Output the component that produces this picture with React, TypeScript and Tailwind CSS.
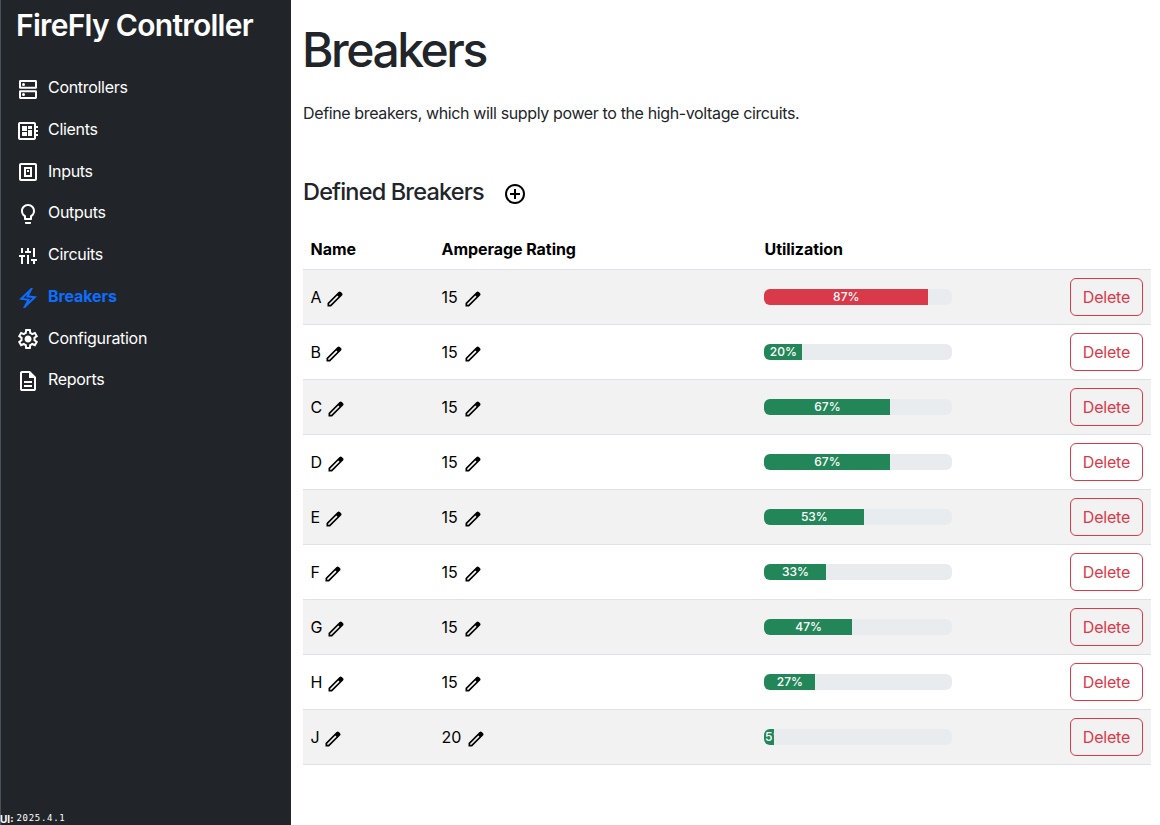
import type { ReactNode } from "react";
import { MdOutlineDeveloperBoard, MdLightbulbOutline } from "react-icons/md";

function Symbol({ d, size = 24, className }: { d: string; size?: number; className?: string }) {
  return (
    <svg viewBox="0 -960 960 960" width={size} height={size} fill="currentColor" className={className}>
      <path d={d} />
    </svg>
  );
}

const EDIT =
  "M200-200h57l391-391-57-57-391 391v57Zm-80 80v-170l528-527q12-11 26.5-17t30.5-6q16 0 31 6t26 18l55 56q12 11 17.5 26t5.5 30q0 16-5.5 30.5T817-647L290-120H120Z";
const ADD =
  "M440-280h80v-160h160v-80H520v-160h-80v160H280v80h160v160Zm40 200q-83 0-156-31.5T197-197q-54-54-85.5-127T80-480q0-83 31.5-156T197-763q54-54 127-85.5T480-880q83 0 156 31.5T763-763q54 54 85.5 127T880-480q0 83-31.5 156T763-197q-54 54-127 85.5T480-80Zm0-80q134 0 227-93t93-227q0-134-93-227t-227-93q-134 0-227 93t-93 227q0 134 93 227t227 93Zm0-320Z";
const DOCUMENT =
  "M320-240h320v-80H320v80Zm0-160h320v-80H320v80ZM240-80q-33 0-56.5-23.5T160-160v-640q0-33 23.5-56.5T240-880h320l240 240v480q0 33-23.5 56.5T720-80H240Zm280-520v-200H240v640h480v-440H520Z";
const SETTINGS =
  "m370-80-16-128q-13-5-24.5-12T307-235l-119 50L78-375l103-78q-1-7-1-13.5v-27q0-6.5 1-13.5L78-585l110-190 119 50q11-8 23-15t24-12l16-128h220l16 128q13 5 24.5 12t22.5 15l119-50 110 190-103 78q1 7 1 13.5v27q0 6.5-2 13.5l103 78-110 190-118-50q-11 8-23 15t-24 12L590-80H370Zm70-80h79l14-106q31-8 57.5-23.5T639-327l99 41 39-68-86-65q5-14 7-29.5t2-31.5q0-16-2-31.5t-7-29.5l86-65-39-68-99 42q-22-23-48.5-38.5T533-694l-13-106h-79l-14 106q-31 8-57.5 23.5T321-633l-99-41-39 68 86 64q-5 15-7 30t-2 32q0 16 2 31t7 30l-86 65 39 68 99-42q22 23 48.5 38.5T427-266l13 106Zm42-180q58 0 99-41t41-99q0-58-41-99t-99-41q-59 0-99.5 41T342-480q0 58 40.5 99t99.5 41Zm-2-140Z";
const BOLT =
  "m280-80 160-300-320-40 480-460h80L520-580l320 40L360-80h-80Zm222-247 161-154-269-34 63-117-160 154 268 33-63 118Zm-22-153Z";
const MIX =
  "M200-160v-280h-80v-80h240v80h-80v280h-80Zm0-440v-200h80v200h-80Zm160 0v-80h80v-120h80v120h80v80H360Zm80 440v-360h80v360h-80Zm240 0v-120h-80v-80h240v80h-80v120h-80Zm0-280v-360h80v360h-80Z";

function ServerIcon() {
  return (
    <svg viewBox="0 0 24 24" width="24" height="24" fill="none" stroke="currentColor" strokeWidth="2">
      <rect x="4" y="4" width="16" height="6.8" rx="0.4" />
      <rect x="4" y="14.2" width="16" height="6.8" rx="0.4" />
      <circle cx="7.5" cy="7.4" r="1.5" fill="currentColor" stroke="none" />
      <circle cx="7.5" cy="17.6" r="1.5" fill="currentColor" stroke="none" />
    </svg>
  );
}

function SwitchIcon() {
  return (
    <svg viewBox="0 0 24 24" width="24" height="24" fill="none" stroke="currentColor" strokeWidth="2">
      <rect x="4" y="4" width="16" height="16" rx="1" />
      <rect x="9" y="8" width="6" height="8" />
      <rect x="11" y="10" width="2" height="2" fill="currentColor" stroke="none" />
    </svg>
  );
}

const nav: { label: string; icon: ReactNode; active?: boolean }[] = [
  { label: "Controllers", icon: <ServerIcon /> },
  { label: "Clients", icon: <MdOutlineDeveloperBoard size={24} /> },
  { label: "Inputs", icon: <SwitchIcon /> },
  { label: "Outputs", icon: <MdLightbulbOutline size={24} /> },
  { label: "Circuits", icon: <Symbol d={MIX} /> },
  { label: "Breakers", icon: <Symbol d={BOLT} />, active: true },
  { label: "Configuration", icon: <Symbol d={SETTINGS} /> },
  { label: "Reports", icon: <Symbol d={DOCUMENT} /> },
];

const breakers = [
  { name: "A", amps: 15, used: 87 },
  { name: "B", amps: 15, used: 20 },
  { name: "C", amps: 15, used: 67 },
  { name: "D", amps: 15, used: 67 },
  { name: "E", amps: 15, used: 53 },
  { name: "F", amps: 15, used: 33 },
  { name: "G", amps: 15, used: 47 },
  { name: "H", amps: 15, used: 27 },
  { name: "J", amps: 20, used: 5 },
];

function Editable({ value, className }: { value: string | number; className: string }) {
  return (
    <div className={"flex items-center " + className}>
      <span>{value}</span>
      <Symbol d={EDIT} size={20} className="mt-[4px]" />
    </div>
  );
}

function Usage({ used }: { used: number }) {
  return (
    <div className="flex h-4 w-[188px] overflow-hidden rounded-md bg-[#e9ecef]">
      <div
        className={
          "min-w-[10px] overflow-hidden pl-px text-center text-xs leading-[15px] font-medium whitespace-nowrap text-white " +
          (used > 80 ? "bg-[#d93a49]" : "bg-[#228658]")
        }
        style={{ width: `${used}%` }}
      >
        {used}%
      </div>
    </div>
  );
}

export default function App() {
  return (
    <div className="flex h-[825px] w-full overflow-hidden bg-white font-['Inter',sans-serif] text-base text-[#212529]">
      <aside className="flex w-[291px] shrink-0 flex-col border-l border-[#495057] bg-[#212529] text-white">
        <h1 className="pt-[6px] pl-[15px] text-[30px] leading-[38px] font-semibold tracking-[-0.7px] whitespace-nowrap">
          FireFly Controller
        </h1>
        <nav className="mt-[22.3px] flex flex-col pl-[15px]">
          {nav.map((n) => (
            <a
              key={n.label}
              className={
                "flex h-[41.75px] items-center gap-2 " +
                (n.active ? "font-bold tracking-[-0.1px] text-[#0d6efd]" : "tracking-[-0.3px]")
              }
            >
              <span className="mt-[3.6px]">{n.icon}</span>
              <span>{n.label}</span>
            </a>
          ))}
        </nav>
        <div className="mt-auto -ml-px flex h-3 items-center gap-[3px] text-[10px]">
          <b>UI:</b>
          <span className="font-['DejaVu_Sans_Mono',monospace] text-[9px] tracking-[0.7px]">2025.4.1</span>
        </div>
      </aside>
      <main className="flex flex-1 flex-col pr-[9px] pl-3">
        <h2 className="mt-[20px] -ml-px text-[48px] leading-[60px] font-medium tracking-[-2.45px]">Breakers</h2>
        <p className="mt-[21px] leading-6 tracking-[-0.37px]">
          Define breakers, which will supply power to the high-voltage circuits.
        </p>
        <div className="mt-[52px] flex h-[30px] items-center gap-[19px]">
          <h3 className="text-[23.5px] font-medium tracking-[-0.83px]">Defined Breakers</h3>
          <Symbol d={ADD} className="mt-1 text-black" />
        </div>
        <table className="mt-[22px] w-full table-fixed border-collapse text-black">
          <colgroup>
            <col className="w-[131px]" />
            <col className="w-[322px]" />
            <col />
            <col className="w-[90px]" />
          </colgroup>
          <thead>
            <tr className="h-10 border-b border-[#dee2e6] text-left tracking-[-0.05px]">
              <th className="px-[7.5px] pt-px">Name</th>
              <th className="px-[7.5px] pt-px">Amperage Rating</th>
              <th className="px-[8.5px] pt-px">Utilization</th>
              <th />
            </tr>
          </thead>
          <tbody>
            {breakers.map((b) => (
              <tr key={b.name} className="h-[55px] border-b border-[#dee2e6] odd:bg-[#f2f2f2]">
                <td className="px-[7.5px]">
                  <Editable value={b.name} className="gap-[3.5px]" />
                </td>
                <td className="px-[7.5px]">
                  <Editable value={b.amps} className="gap-[5px]" />
                </td>
                <td className="px-2">
                  <Usage used={b.used} />
                </td>
                <td className="pr-2">
                  <button className="ml-auto block h-[38px] w-[73px] rounded-md border border-[#d93a49] tracking-[-0.2px] text-[#d93a49]">
                    Delete
                  </button>
                </td>
              </tr>
            ))}
          </tbody>
        </table>
      </main>
    </div>
  );
}
